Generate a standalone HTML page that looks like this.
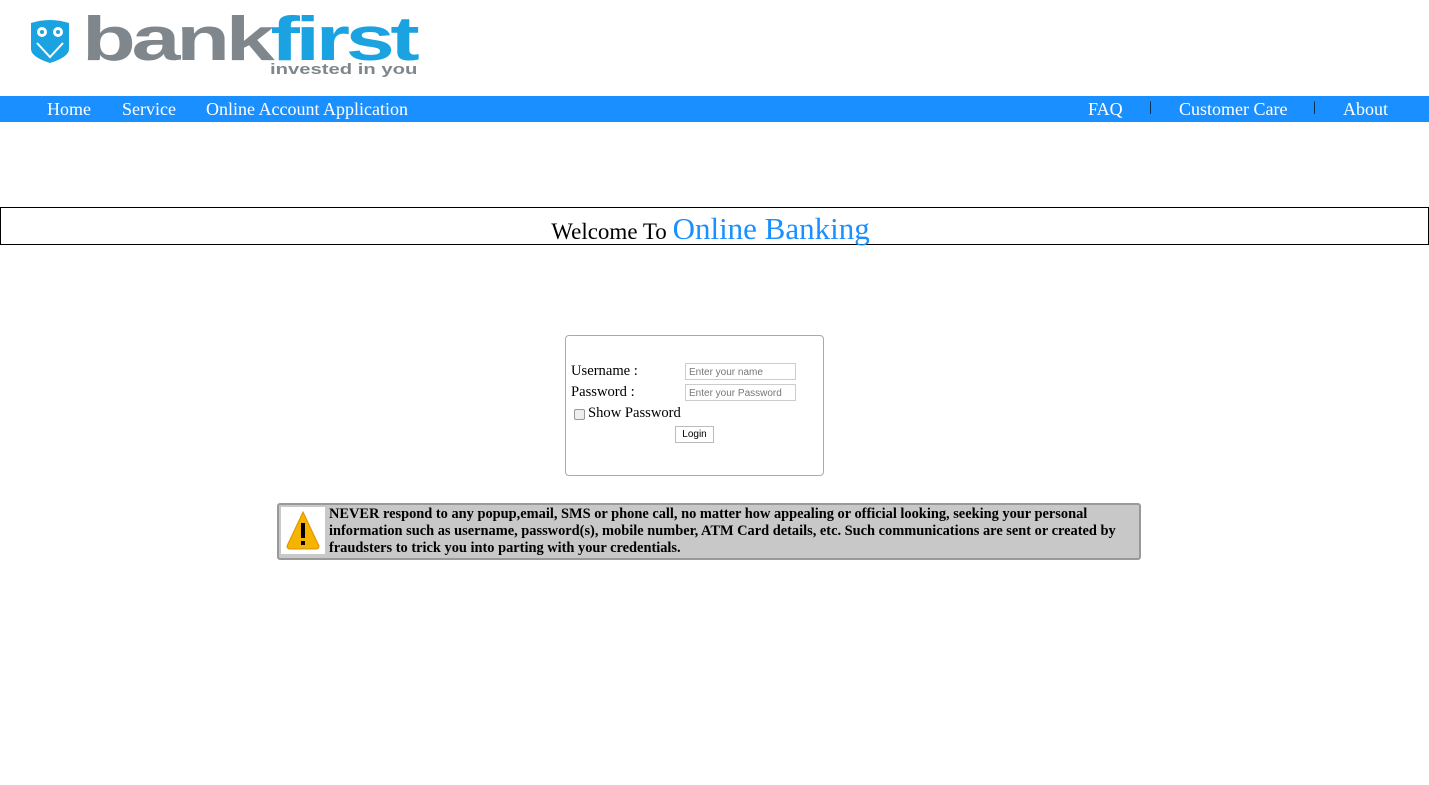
<!DOCTYPE html>
<html><head><style>
body{margin:0;width:1429px;height:785px;background:#fff;font-family:"Liberation Serif",serif;position:relative;overflow:hidden}
.abs{position:absolute}
.nav{top:96px;left:0;width:1429px;height:26px;background:#1a8fff;color:#fff;font-size:18px}
.nav span{position:absolute;top:3px}
.inp{position:absolute;border:1px solid #ccc;font:10px "Liberation Sans",sans-serif;color:#777;padding-left:3px;line-height:17px;box-sizing:border-box;width:111px;height:17px}
</style></head><body>
<svg class="abs" style="left:27px;top:19px" width="46" height="44" viewBox="0 0 46 44">
<path d="M4 4 Q23 -2 42 4 L42 30 Q42 38 23 44 Q4 38 4 30Z" fill="#1aa3e0"/>
<circle cx="15" cy="13" r="5" fill="#fff"/><circle cx="31" cy="13" r="5" fill="#fff"/>
<circle cx="15" cy="13" r="2" fill="#1aa3e0"/><circle cx="31" cy="13" r="2" fill="#1aa3e0"/>
<path d="M10 24 L23 38 L36 24" stroke="#fff" stroke-width="2" fill="none"/>
</svg>
<div class="abs" style="left:82px;top:4px;font:bold 62px 'Liberation Sans',sans-serif;letter-spacing:-3px;color:#7f878d;transform:scaleX(1.42);transform-origin:0 0">bank<span style="color:#1aa3e0">first</span></div>
<div class="abs" style="left:270px;top:61px;font:bold 15px 'Liberation Sans',sans-serif;color:#7f878d;transform:scaleX(1.35);transform-origin:0 0">invested in you</div>
<div class="abs nav">
<span style="left:47px">Home</span><span style="left:122px">Service</span><span style="left:206px">Online Account Application</span>
<span style="left:1088px">FAQ</span><span style="left:1149px;color:#000;font-size:14px;top:4px">|</span><span style="left:1179px">Customer Care</span><span style="left:1313px;color:#000;font-size:14px;top:4px">|</span><span style="left:1343px">About</span>
</div>
<div class="abs" style="left:0;top:207px;width:1427px;height:36px;border:1px solid #000;text-align:center;font-size:23px;line-height:42px"><span style="margin-left:-8px">Welcome To</span> <span style="color:#1a8fff;font-size:31px">Online Banking</span></div>
<div class="abs" style="left:565px;top:335px;width:257px;height:139px;border:1px solid #aaa;border-radius:4px"></div>
<div class="abs" style="left:571px;top:363px;font-size:14.6px">Username :</div>
<div class="abs" style="left:571px;top:384px;font-size:14.6px">Password :</div>
<div class="inp" style="left:685px;top:363px">Enter your name</div>
<div class="inp" style="left:685px;top:384px">Enter your Password</div>
<div class="abs" style="left:574px;top:409px;width:9px;height:9px;border:1px solid #999;border-radius:2px;background:#eee"></div>
<div class="abs" style="left:588px;top:405px;font-size:14.6px">Show Password</div>
<div class="abs" style="left:675px;top:426px;width:37px;height:15px;border:1px solid #bbb;font:10px 'Liberation Sans',sans-serif;text-align:center;line-height:16px">Login</div>
<div class="abs" style="left:277px;top:503px;width:860px;height:53px;border:2px solid #999;border-radius:3px;background:#c8c8c8"></div>
<div class="abs" style="left:281px;top:507px;width:44px;height:47px;background:#fff"></div>
<svg class="abs" style="left:285px;top:510px" width="36" height="40" viewBox="0 0 36 40"><path d="M18 2 L34 36 Q34 39 31 39 L5 39 Q2 39 2 36Z" fill="#f5b400" stroke="#e09000"/><rect x="16" y="13" width="4" height="15" fill="#000"/><rect x="16" y="31" width="4" height="4" fill="#000"/></svg>
<div class="abs" style="left:329px;top:506px;width:800px;font:bold 14.4px 'Liberation Serif',serif;line-height:17px">NEVER respond to any popup,email, SMS or phone call, no matter how appealing or official looking, seeking your personal information such as username, password(s), mobile number, ATM Card details, etc. Such communications are sent or created by fraudsters to trick you into parting with your credentials.</div>
</body></html>
